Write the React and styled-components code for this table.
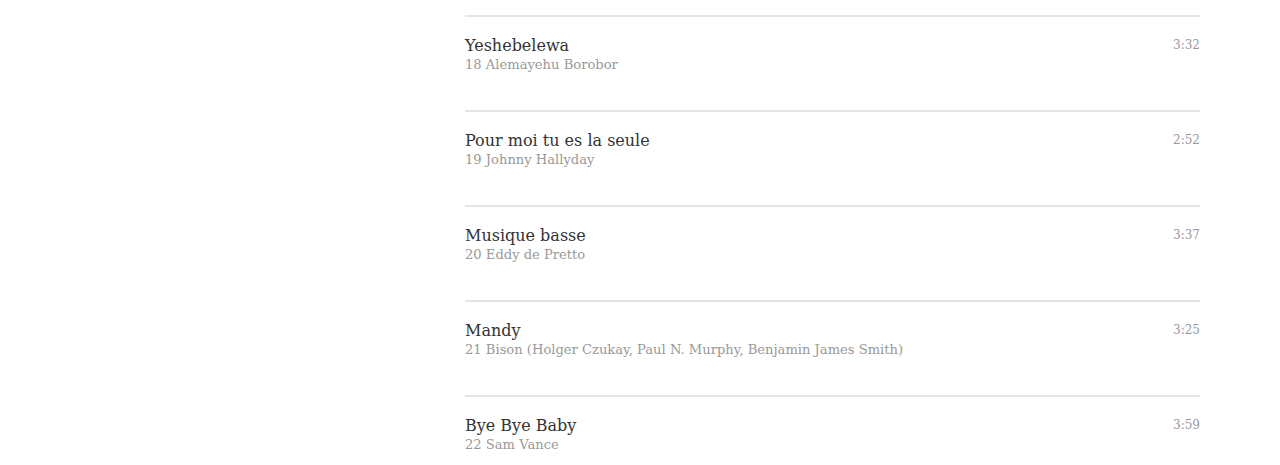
import styled, {createGlobalStyle} from "styled-components";

const GlobalStyle = createGlobalStyle`
    html, body {
        margin: 0;
        padding: 0;
        background: #fff;
    }
    body {
        font-family: "DejaVu Serif", "Liberation Serif", serif;
    }
`;

const Page = styled.div`
    display: grid;
    grid-template-columns: 465px 735px;
    padding-top: 15px;
`;

const Sidebar = styled.aside`
`;

const List = styled.ul`
    list-style: none;
    margin: 0;
    padding: 0;
`;

const Track = styled.li`
    display: flex;
    justify-content: space-between;
    align-items: flex-start;
    height: 95px;
    box-sizing: border-box;
    border-top: 2px solid #e4e4e4;
    padding-top: 18px;
`;

const Info = styled.div`
    display: flex;
    flex-direction: column;
`;

const Title = styled.span`
    font-size: 16px;
    line-height: 21px;
    color: #333;
`;

const Artist = styled.span`
    font-size: 13.1px;
    line-height: 18px;
    color: #999;
`;

const Duration = styled.span`
    font-size: 12px;
    line-height: 21px;
    color: #999;
`;

const tracks = [
    {n: 18, title: "Yeshebelewa", artist: "Alemayehu Borobor", time: "3:32"},
    {n: 19, title: "Pour moi tu es la seule", artist: "Johnny Hallyday", time: "2:52"},
    {n: 20, title: "Musique basse", artist: "Eddy de Pretto", time: "3:37"},
    {n: 21, title: "Mandy", artist: "Bison (Holger Czukay, Paul N. Murphy, Benjamin James Smith)", time: "3:25"},
    {n: 22, title: "Bye Bye Baby", artist: "Sam Vance", time: "3:59"},
];

const App = () => {
    return (
        <>
            <GlobalStyle />
            <Page>
                <Sidebar />
                <List>
                    {tracks.map((t) => (
                        <Track key={t.n}>
                            <Info>
                                <Title>{t.title}</Title>
                                <Artist>{t.n} {t.artist}</Artist>
                            </Info>
                            <Duration>{t.time}</Duration>
                        </Track>
                    ))}
                </List>
            </Page>
        </>
    );
}

export default App;
